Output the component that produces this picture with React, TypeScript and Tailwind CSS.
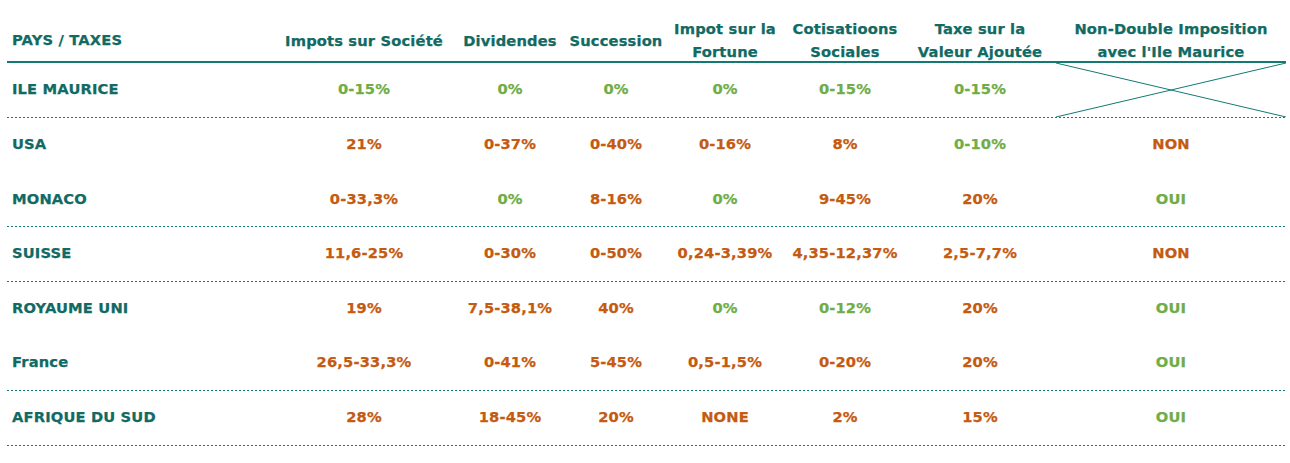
import React from "react";

type Tone = "g" | "o";
type Cell = [string, Tone];

const COLS = "grid-cols-[269px_176px_116px_96px_122px_118px_152px_230px]";

const headers: string[][] = [
  ["Impots sur Société"],
  ["Dividendes"],
  ["Succession"],
  ["Impot sur la", "Fortune"],
  ["Cotisatioons", "Sociales"],
  ["Taxe sur la", "Valeur Ajoutée"],
  ["Non-Double Imposition", "avec l'Ile Maurice"],
];

const rows: { name: string; cells: Cell[]; line: boolean; h: string }[] = [
  {
    name: "ILE MAURICE",
    cells: [["0-15%", "g"], ["0%", "g"], ["0%", "g"], ["0%", "g"], ["0-15%", "g"], ["0-15%", "g"]],
    line: true,
    h: "h-[54px]",
  },
  {
    name: "USA",
    cells: [["21%", "o"], ["0-37%", "o"], ["0-40%", "o"], ["0-16%", "o"], ["8%", "o"], ["0-10%", "g"], ["NON", "o"]],
    line: false,
    h: "h-[54px]",
  },
  {
    name: "MONACO",
    cells: [["0-33,3%", "o"], ["0%", "g"], ["8-16%", "o"], ["0%", "g"], ["9-45%", "o"], ["20%", "o"], ["OUI", "g"]],
    line: true,
    h: "h-[53px]",
  },
  {
    name: "SUISSE",
    cells: [["11,6-25%", "o"], ["0-30%", "o"], ["0-50%", "o"], ["0,24-3,39%", "o"], ["4,35-12,37%", "o"], ["2,5-7,7%", "o"], ["NON", "o"]],
    line: true,
    h: "h-[54px]",
  },
  {
    name: "ROYAUME UNI",
    cells: [["19%", "o"], ["7,5-38,1%", "o"], ["40%", "o"], ["0%", "g"], ["0-12%", "g"], ["20%", "o"], ["OUI", "g"]],
    line: false,
    h: "h-[53px]",
  },
  {
    name: "France",
    cells: [["26,5-33,3%", "o"], ["0-41%", "o"], ["5-45%", "o"], ["0,5-1,5%", "o"], ["0-20%", "o"], ["20%", "o"], ["OUI", "g"]],
    line: true,
    h: "h-[54px]",
  },
  {
    name: "AFRIQUE DU SUD",
    cells: [["28%", "o"], ["18-45%", "o"], ["20%", "o"], ["NONE", "o"], ["2%", "o"], ["15%", "o"], ["OUI", "g"]],
    line: true,
    h: "h-[54px]",
  },
];

function Value({ text, tone }: { text: string; tone: Tone }) {
  return (
    <div className="flex items-center justify-center whitespace-nowrap pb-[1px]">
      <span className={tone === "g" ? "text-[#70ad47]" : "text-[#c55a11]"}>{text}</span>
    </div>
  );
}

function Cross() {
  return (
    <div className="relative">
      <svg className="absolute inset-0 h-full w-full" viewBox="0 0 230 54" preserveAspectRatio="none">
        <line x1="0" y1="0" x2="230" y2="54" stroke="#127a73" strokeWidth="1" />
        <line x1="0" y1="54" x2="230" y2="0" stroke="#127a73" strokeWidth="1" />
      </svg>
    </div>
  );
}

export default function App() {
  return (
    <div
      className="w-[1290px] h-[463px] bg-white pl-[7px] text-[14.7px] tracking-[0.15px] font-bold text-[#116a63] [-webkit-text-stroke:0.25px_currentColor]"
      style={{ fontFamily: '"DejaVu Sans", Verdana, sans-serif' }}
    >
      <div className="w-[1279px]">
        {/* header */}
        <div className={`grid ${COLS} h-[61px] pt-[17px]`}>
          <div className="flex items-center pl-[5px] whitespace-nowrap">PAYS / TAXES</div>
          {headers.map((h, i) => (
            <div key={i} className="flex items-center justify-center">
              <div className="flex flex-col items-center leading-[23px] whitespace-nowrap">
                {h.map((l, j) => (
                  <span key={j}>{l}</span>
                ))}
              </div>
            </div>
          ))}
        </div>
        <div className="h-[2px] bg-[#127a73]" />
        {rows.map((r, i) => (
          <div key={i}>
            <div className={`grid ${COLS} ${r.h}`}>
              <div className="flex items-center pl-[5px] whitespace-nowrap pb-[1px]">{r.name}</div>
              {r.cells.map((c, j) => (
                <Value key={j} text={c[0]} tone={c[1]} />
              ))}
              {r.cells.length === 6 && <Cross />}
            </div>
            {r.line ? (
              <div className="h-px bg-[repeating-linear-gradient(to_right,#127a73_0px,#127a73_2px,transparent_2px,transparent_4px)]" />
            ) : (
              <div className="h-px" />
            )}
          </div>
        ))}
      </div>
    </div>
  );
}
